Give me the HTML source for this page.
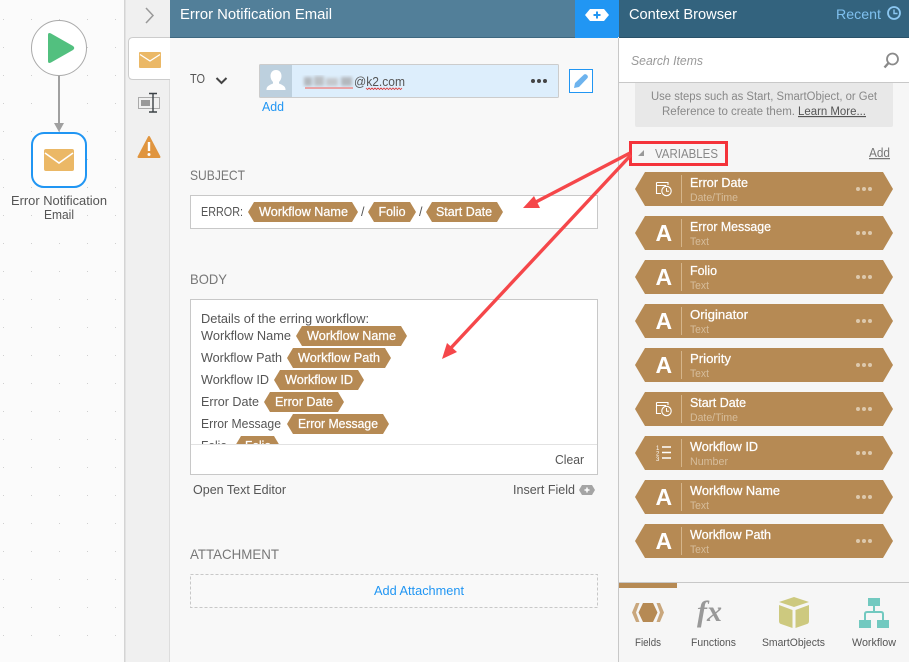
<!DOCTYPE html>
<html><head><meta charset="utf-8"><style>
html,body{margin:0;padding:0;width:909px;height:662px;overflow:hidden;background:#f8f8f8}
svg{display:block}
text{font-family:"Liberation Sans",sans-serif;font-size:12.5px;fill:#555}
.h{font-size:14px;fill:#777}
.w{fill:#fff;stroke:#fff;stroke-width:.25px}
.p{fill:#b68a54}
.s{font-size:11px;fill:#d6bd9c}
.b{fill:#2196f3}
.A{font-size:23px;font-weight:bold;fill:#fff}
.l{font-size:11px}
</style></head><body>
<svg width="909" height="662" viewBox="0 0 909 662" xmlns="http://www.w3.org/2000/svg">
<defs>
<pattern id="dots" width="28" height="28" patternUnits="userSpaceOnUse" x="3" y="19"><rect width="1" height="1" fill="#cfcfcf"/></pattern>
<filter id="bl"><feGaussianBlur stdDeviation="1.6"/></filter>
<clipPath id="bodyclip"><rect x="191" y="300" width="406" height="144"/></clipPath>
</defs>
<!-- canvas -->
<rect width="124" height="662" fill="#fbfbfb"/>
<rect width="124" height="662" fill="url(#dots)"/>
<circle cx="59" cy="48" r="27.5" fill="#fff" stroke="#aaa"/>
<path d="M51 33.500L73 46Q75.500 48 73 50L51 62.500Q48 64 48 61L48 35Q48 32 51 33.500Z" fill="#52c07f"/>
<path d="M59 76V124" stroke="#a0a0a0" stroke-width="2"/>
<path d="M54 123H64L59 132Z" fill="#a0a0a0"/>
<rect x="32" y="133" width="54" height="54" rx="12" fill="#fff" stroke="#2196f3" stroke-width="2"/>
<rect x="44" y="149" width="30" height="22" rx="2" fill="#ebb866"/>
<path d="M45 153L59 163L73 153" fill="none" stroke="#fff" stroke-width="1.6"/>
<text x="11" y="205" textLength="96" lengthAdjust="spacingAndGlyphs">Error Notification</text>
<text x="44" y="219" textLength="30" lengthAdjust="spacingAndGlyphs">Email</text>
<!-- strip -->
<rect x="124" y="0" width="46" height="662" fill="#f0f0f0"/>
<rect x="124" y="0" width="1.5" height="662" fill="#d4d4d4"/>
<rect x="169" y="79" width="1" height="583" fill="#ddd"/>
<path d="M146 8L153 15.5L146 23" fill="none" stroke="#999" stroke-width="1.5"/>
<path d="M170 37.5H133Q128.500 37.500 128.500 42V75Q128.500 79.500 133 79.500H170" fill="#fff" stroke="#ccc"/>
<rect x="139" y="52" width="22" height="16" rx="1" fill="#ebb866"/>
<path d="M140 54.500L150 61L160 54.500" fill="none" stroke="#fff" stroke-width="1.300"/>
<rect x="138.500" y="97.500" width="21" height="11" fill="none" stroke="#aaa"/>
<rect x="141" y="100" width="9" height="6" fill="#999"/>
<path d="M153 93.500V112M149 93.500H157M149 112H157" stroke="#3c4246" stroke-width="1.400" fill="none"/>
<path d="M149 137L159.500 157H138.500Z" fill="#e0953f" stroke="#e0953f" stroke-width="2" stroke-linejoin="round"/>
<path d="M149 142V151" stroke="#fff" stroke-width="2.400"/><circle cx="149" cy="154.500" r="1.500" fill="#fff"/>
<!-- header -->
<rect x="170" y="0" width="405" height="37" fill="#527f99"/>
<rect x="170" y="37" width="405" height="1" fill="#3e6880"/>
<text x="180" y="19" textLength="152" lengthAdjust="spacingAndGlyphs" style="font-size:14.500px;fill:#fff">Error Notification Email</text>
<rect x="575" y="0" width="43" height="38" fill="#2196f3"/>
<path d="M585 15L590 9H604L609 15L604 21H590Z" fill="#fff"/>
<path d="M597 11.500V18.500M593.500 15H600.500" stroke="#2196f3" stroke-width="2"/>
<!-- TO -->
<text x="190" y="83" textLength="15" lengthAdjust="spacingAndGlyphs" style="font-size:12.500px">TO</text>
<path d="M216.500 78L221.500 83L226.500 78" fill="none" stroke="#444" stroke-width="2"/>
<rect x="259.500" y="64.500" width="299" height="33" rx="1" fill="#ddeefc" stroke="#ccc"/>
<rect x="260" y="65" width="32" height="32" fill="#bdd0de"/>
<path d="M276 70c-3.800 0-5.500 3-5.500 6 0 2.500 1 4.500 2.500 6v1.500c-2 1-6 2-6.500 5.500v1h19v-1c-.5-3.500-4.500-4.500-6.500-5.500V82c1.500-1.500 2.500-3.500 2.500-6 0-3-1.700-6-5.500-6z" fill="#fff"/>
<g filter="url(#bl)" fill="#b3b8bd"><rect x="304" y="77" width="8" height="9"/><rect x="314" y="76" width="10" height="10" fill="#bcc0c4"/><rect x="326" y="78" width="12" height="8" fill="#c4c8cc"/><rect x="341" y="77" width="11" height="9"/></g>
<rect x="305" y="87" width="48" height="2" fill="#e8a4a6"/>
<text x="354" y="86" textLength="51" lengthAdjust="spacingAndGlyphs" style="font-size:13px">@k2.com</text>
<path d="M366 88l1.500 1.500 1.500-1.500 1.500 1.500 1.500-1.500 1.500 1.500 1.500-1.500 1.500 1.500 1.500-1.500 1.500 1.500 1.500-1.500 1.500 1.500 1.500-1.500 1.500 1.500 1.500-1.500 1.500 1.500 1.500-1.500 1.500 1.500 1.500-1.500 1.500 1.500 1.500-1.500 1.500 1.500 1.500-1.500 1.500 1.500 1.500-1.500" fill="none" stroke="#d33" stroke-width=".8"/>
<g fill="#444"><circle cx="533" cy="81" r="2"/><circle cx="539" cy="81" r="2"/><circle cx="545" cy="81" r="2"/></g>
<rect x="569.500" y="69.500" width="23" height="23" fill="#fff" stroke="#2196f3"/>
<path d="M574 88L575 83L584 74.500Q585.500 73.500 587 75Q588.500 76.500 587.500 78L579 87Z" fill="#6db3ee"/>
<text x="262" y="111" textLength="22" lengthAdjust="spacingAndGlyphs" class="b" style="font-size:13px">Add</text>
<!-- subject -->
<text x="190" y="180" textLength="55" lengthAdjust="spacingAndGlyphs" class="h">SUBJECT</text>
<rect x="190.500" y="195.500" width="407" height="33" fill="#fff" stroke="#c8c8c8"/>
<text x="201" y="216" textLength="42" lengthAdjust="spacingAndGlyphs">ERROR:</text>
<path class="p" d="M248 212L254 202H352L358 212L352 222H254Z"/>
<text x="259" y="216" textLength="89" lengthAdjust="spacingAndGlyphs" class="w">Workflow Name</text>
<text x="361" y="216">/</text>
<path class="p" d="M368 212L374 202H410L416 212L410 222H374Z"/>
<text x="378.500" y="216" textLength="27" lengthAdjust="spacingAndGlyphs" class="w">Folio</text>
<text x="419" y="216">/</text>
<path class="p" d="M426 212L432 202H497L503 212L497 222H432Z"/>
<text x="436" y="216" textLength="56" lengthAdjust="spacingAndGlyphs" class="w">Start Date</text>
<!-- body -->
<text x="190" y="284" textLength="37" lengthAdjust="spacingAndGlyphs" class="h">BODY</text>
<rect x="190.500" y="299.500" width="407" height="175" fill="#fff" stroke="#c8c8c8"/>
<g clip-path="url(#bodyclip)">
<text x="201" y="323" textLength="168" lengthAdjust="spacingAndGlyphs">Details of the erring workflow:</text>
<text x="201" y="340" textLength="90" lengthAdjust="spacingAndGlyphs">Workflow Name</text>
<path class="p" d="M296 336L302 326H401L407 336L401 346H302Z"/>
<text x="307" y="340" textLength="89" lengthAdjust="spacingAndGlyphs" class="w">Workflow Name</text>
<text x="201" y="362" textLength="81" lengthAdjust="spacingAndGlyphs">Workflow Path</text>
<path class="p" d="M287 358L293 348H385L391 358L385 368H293Z"/>
<text x="298" y="362" textLength="82" lengthAdjust="spacingAndGlyphs" class="w">Workflow Path</text>
<text x="201" y="384" textLength="68" lengthAdjust="spacingAndGlyphs">Workflow ID</text>
<path class="p" d="M274 380L280 370H358L364 380L358 390H280Z"/>
<text x="285" y="384" textLength="68" lengthAdjust="spacingAndGlyphs" class="w">Workflow ID</text>
<text x="201" y="406" textLength="58" lengthAdjust="spacingAndGlyphs">Error Date</text>
<path class="p" d="M264 402L270 392H338L344 402L338 412H270Z"/>
<text x="275" y="406" textLength="58" lengthAdjust="spacingAndGlyphs" class="w">Error Date</text>
<text x="201" y="428" textLength="80" lengthAdjust="spacingAndGlyphs">Error Message</text>
<path class="p" d="M287 424L293 414H383L389 424L383 434H293Z"/>
<text x="298" y="428" textLength="80" lengthAdjust="spacingAndGlyphs" class="w">Error Message</text>
<text x="201" y="450" textLength="26" lengthAdjust="spacingAndGlyphs">Folio</text>
<path class="p" d="M235 446L241 436H274L280 446L274 456H241Z"/>
<text x="245" y="450" textLength="26" lengthAdjust="spacingAndGlyphs" class="w">Folio</text>
</g>
<rect x="191" y="444" width="406" height="1" fill="#e2e2e2"/>
<text x="555" y="464" textLength="29" lengthAdjust="spacingAndGlyphs">Clear</text>
<text x="193" y="494" textLength="93" lengthAdjust="spacingAndGlyphs">Open Text Editor</text>
<text x="513" y="494" textLength="62" lengthAdjust="spacingAndGlyphs">Insert Field</text>
<path d="M579 490L582 485H592L595 490L592 495H582Z" fill="#a5a5a5"/>
<path d="M587 487.500V492.500M584.500 490H589.500" stroke="#fff" stroke-width="1.500"/>
<text x="190" y="559" textLength="89" lengthAdjust="spacingAndGlyphs" class="h">ATTACHMENT</text>
<rect x="190.500" y="574.500" width="407" height="33" fill="#f9f9f9" stroke="#c8c8c8" stroke-dasharray="3 2"/>
<text x="374" y="595" textLength="90" lengthAdjust="spacingAndGlyphs" class="b">Add Attachment</text>
<!-- right panel -->
<rect x="618" y="0" width="291" height="662" fill="#f6f6f6"/>
<rect x="618" y="38" width="1" height="624" fill="#c8c8c8"/>
<rect x="619" y="0" width="290" height="37" fill="#33637e"/>
<rect x="618" y="0" width="1" height="37" fill="#2196f3"/>
<rect x="619" y="37" width="290" height="1" fill="#2a5269"/>
<text x="629" y="19" textLength="108" lengthAdjust="spacingAndGlyphs" style="font-size:14.500px;fill:#fff">Context Browser</text>
<text x="836" y="19" textLength="45" lengthAdjust="spacingAndGlyphs" style="font-size:14px;fill:#7fc0ef">Recent</text>
<circle cx="894" cy="13" r="6" fill="none" stroke="#8cc8f2" stroke-width="1.800"/>
<path d="M894 9.500V13.500H897.500" fill="none" stroke="#8cc8f2" stroke-width="1.400"/>
<rect x="619" y="38" width="290" height="44" fill="#fff"/>
<rect x="619" y="82" width="290" height="1" fill="#c8c8c8"/>
<text x="631" y="65" textLength="72" lengthAdjust="spacingAndGlyphs" style="font-style:italic;fill:#999">Search Items</text>
<circle cx="892.500" cy="59" r="5.500" fill="none" stroke="#8a8a8a" stroke-width="1.800"/>
<path d="M888.500 63L884.500 67.500" stroke="#8a8a8a" stroke-width="2.400"/>
<path d="M635 83H893V125Q893 127 891 127H637Q635 127 635 125Z" fill="#e8e8e8"/>
<text x="651" y="100" textLength="226" lengthAdjust="spacingAndGlyphs" style="font-size:11.500px;fill:#888">Use steps such as Start, SmartObject, or Get</text>
<text x="662" y="115" textLength="133" lengthAdjust="spacingAndGlyphs" style="font-size:11.500px;fill:#888">Reference to create them.</text>
<text x="798" y="115" textLength="68" lengthAdjust="spacingAndGlyphs" style="font-size:11.500px;fill:#555;text-decoration:underline">Learn More...</text>
<path d="M644 150V156H638Z" fill="#999"/>
<text x="655" y="158" textLength="63" lengthAdjust="spacingAndGlyphs" style="font-size:12.500px;fill:#888">VARIABLES</text>
<text x="869" y="157" textLength="21" lengthAdjust="spacingAndGlyphs" style="fill:#777;text-decoration:underline">Add</text>

<!-- variable pills -->
<g><path class="p" d="M635 189L645 172H883L893 189L883 206H645Z"/><rect x="681" y="175" width="1" height="28" fill="#d5b58b"/><text x="690" y="187" textLength="58" lengthAdjust="spacingAndGlyphs" class="w">Error Date</text><text x="690" y="201" textLength="48" lengthAdjust="spacingAndGlyphs" class="s">Date/Time</text><g fill="#ddc9ad"><circle cx="858" cy="189" r="2"/><circle cx="864" cy="189" r="2"/><circle cx="870" cy="189" r="2"/></g>
<path d="M656.500 182.500H668V185M656.500 182.500V193.500H661M656.500 185.500H666" fill="none" stroke="#fff" stroke-width="1.100"/><circle cx="666.500" cy="191" r="4.700" fill="#b68a54" stroke="#fff" stroke-width="1.100"/><path d="M666.500 188V191.200H669" fill="none" stroke="#fff"/></g>
<g transform="translate(0,44)"><path class="p" d="M635 189L645 172H883L893 189L883 206H645Z"/><rect x="681" y="175" width="1" height="28" fill="#d5b58b"/><text x="690" y="187" textLength="81" lengthAdjust="spacingAndGlyphs" class="w">Error Message</text><text x="690" y="201" textLength="19" lengthAdjust="spacingAndGlyphs" class="s">Text</text><g fill="#ddc9ad"><circle cx="858" cy="189" r="2"/><circle cx="864" cy="189" r="2"/><circle cx="870" cy="189" r="2"/></g><text x="655.500" y="197" class="A">A</text></g>
<g transform="translate(0,88)"><path class="p" d="M635 189L645 172H883L893 189L883 206H645Z"/><rect x="681" y="175" width="1" height="28" fill="#d5b58b"/><text x="690" y="187" textLength="27" lengthAdjust="spacingAndGlyphs" class="w">Folio</text><text x="690" y="201" textLength="19" lengthAdjust="spacingAndGlyphs" class="s">Text</text><g fill="#ddc9ad"><circle cx="858" cy="189" r="2"/><circle cx="864" cy="189" r="2"/><circle cx="870" cy="189" r="2"/></g><text x="655.500" y="197" class="A">A</text></g>
<g transform="translate(0,132)"><path class="p" d="M635 189L645 172H883L893 189L883 206H645Z"/><rect x="681" y="175" width="1" height="28" fill="#d5b58b"/><text x="690" y="187" textLength="58" lengthAdjust="spacingAndGlyphs" class="w">Originator</text><text x="690" y="201" textLength="19" lengthAdjust="spacingAndGlyphs" class="s">Text</text><g fill="#ddc9ad"><circle cx="858" cy="189" r="2"/><circle cx="864" cy="189" r="2"/><circle cx="870" cy="189" r="2"/></g><text x="655.500" y="197" class="A">A</text></g>
<g transform="translate(0,176)"><path class="p" d="M635 189L645 172H883L893 189L883 206H645Z"/><rect x="681" y="175" width="1" height="28" fill="#d5b58b"/><text x="690" y="187" textLength="41" lengthAdjust="spacingAndGlyphs" class="w">Priority</text><text x="690" y="201" textLength="19" lengthAdjust="spacingAndGlyphs" class="s">Text</text><g fill="#ddc9ad"><circle cx="858" cy="189" r="2"/><circle cx="864" cy="189" r="2"/><circle cx="870" cy="189" r="2"/></g><text x="655.500" y="197" class="A">A</text></g>
<g transform="translate(0,220)"><path class="p" d="M635 189L645 172H883L893 189L883 206H645Z"/><rect x="681" y="175" width="1" height="28" fill="#d5b58b"/><text x="690" y="187" textLength="56" lengthAdjust="spacingAndGlyphs" class="w">Start Date</text><text x="690" y="201" textLength="48" lengthAdjust="spacingAndGlyphs" class="s">Date/Time</text><g fill="#ddc9ad"><circle cx="858" cy="189" r="2"/><circle cx="864" cy="189" r="2"/><circle cx="870" cy="189" r="2"/></g>
<path d="M656.500 182.500H668V185M656.500 182.500V193.500H661M656.500 185.500H666" fill="none" stroke="#fff" stroke-width="1.100"/><circle cx="666.500" cy="191" r="4.700" fill="#b68a54" stroke="#fff" stroke-width="1.100"/><path d="M666.500 188V191.200H669" fill="none" stroke="#fff"/></g>
<g transform="translate(0,264)"><path class="p" d="M635 189L645 172H883L893 189L883 206H645Z"/><rect x="681" y="175" width="1" height="28" fill="#d5b58b"/><text x="690" y="187" textLength="68" lengthAdjust="spacingAndGlyphs" class="w">Workflow ID</text><text x="690" y="201" textLength="38" lengthAdjust="spacingAndGlyphs" class="s">Number</text><g fill="#ddc9ad"><circle cx="858" cy="189" r="2"/><circle cx="864" cy="189" r="2"/><circle cx="870" cy="189" r="2"/></g>
<path d="M662 183H671M662 188.500H671M662 194H671" stroke="#fff" stroke-width="1.500"/><text x="656" y="186" style="font-size:6px;fill:#fff">1</text><text x="656" y="191.500" style="font-size:6px;fill:#fff">2</text><text x="656" y="197" style="font-size:6px;fill:#fff">3</text></g>
<g transform="translate(0,308)"><path class="p" d="M635 189L645 172H883L893 189L883 206H645Z"/><rect x="681" y="175" width="1" height="28" fill="#d5b58b"/><text x="690" y="187" textLength="90" lengthAdjust="spacingAndGlyphs" class="w">Workflow Name</text><text x="690" y="201" textLength="19" lengthAdjust="spacingAndGlyphs" class="s">Text</text><g fill="#ddc9ad"><circle cx="858" cy="189" r="2"/><circle cx="864" cy="189" r="2"/><circle cx="870" cy="189" r="2"/></g><text x="655.500" y="197" class="A">A</text></g>
<g transform="translate(0,352)"><path class="p" d="M635 189L645 172H883L893 189L883 206H645Z"/><rect x="681" y="175" width="1" height="28" fill="#d5b58b"/><text x="690" y="187" textLength="81" lengthAdjust="spacingAndGlyphs" class="w">Workflow Path</text><text x="690" y="201" textLength="19" lengthAdjust="spacingAndGlyphs" class="s">Text</text><g fill="#ddc9ad"><circle cx="858" cy="189" r="2"/><circle cx="864" cy="189" r="2"/><circle cx="870" cy="189" r="2"/></g><text x="655.500" y="197" class="A">A</text></g>

<!-- bottom tabs -->
<rect x="619" y="582" width="290" height="1" fill="#c8c8c8"/>
<rect x="619" y="583" width="58" height="5" fill="#b68a54"/>
<path d="M636 603L632 612.500L636 622H639.500L636 612.500L639.500 603Z" fill="#c9a77d"/>
<path d="M660 603L664 612.500L660 622H656.500L660 612.500L656.500 603Z" fill="#c9a77d"/>
<path d="M643 603H653L657.500 612.500L653 622H643L638.500 612.500Z" fill="#b68a54"/>
<text x="635" y="646" textLength="26" lengthAdjust="spacingAndGlyphs" class="l">Fields</text>
<text x="697" y="621" style="font:italic bold 30px 'Liberation Serif',serif;fill:#999">fx</text>
<text x="691" y="646" textLength="45" lengthAdjust="spacingAndGlyphs" class="l">Functions</text>
<path d="M794 597L809 602L794 607L779 602Z" fill="#cdc97f"/>
<path d="M779 605L792.500 610V628L781 624Q779 623.500 779 621Z" fill="#cdc97f"/>
<path d="M809 605L795.500 610V628L807 624Q809 623.500 809 621Z" fill="#cdc97f"/>
<text x="762" y="646" textLength="63" lengthAdjust="spacingAndGlyphs" class="l">SmartObjects</text>
<rect x="868" y="598" width="12" height="8" fill="#72c9c0"/>
<path d="M874 606V612M865 620V614Q865 612 867 612H881Q883 612 883 614V620" fill="none" stroke="#72c9c0" stroke-width="2"/>
<rect x="859" y="620" width="12" height="8" fill="#72c9c0"/>
<rect x="877" y="620" width="12" height="8" fill="#72c9c0"/>
<text x="852" y="646" textLength="44" lengthAdjust="spacingAndGlyphs" class="l">Workflow</text>

<!-- annotations -->
<rect x="630.500" y="142.500" width="96" height="22" fill="none" stroke="#f4333a" stroke-width="3"/>
<g stroke="#f5474a" stroke-width="3.400" fill="none"><path d="M630 153L532 204"/><path d="M631 155L449 350"/></g>
<path d="M523 208L534 196L540 208Z" fill="#f5474a"/>
<path d="M442 359L447 343L457 352Z" fill="#f5474a"/>
</svg>
</body></html>
